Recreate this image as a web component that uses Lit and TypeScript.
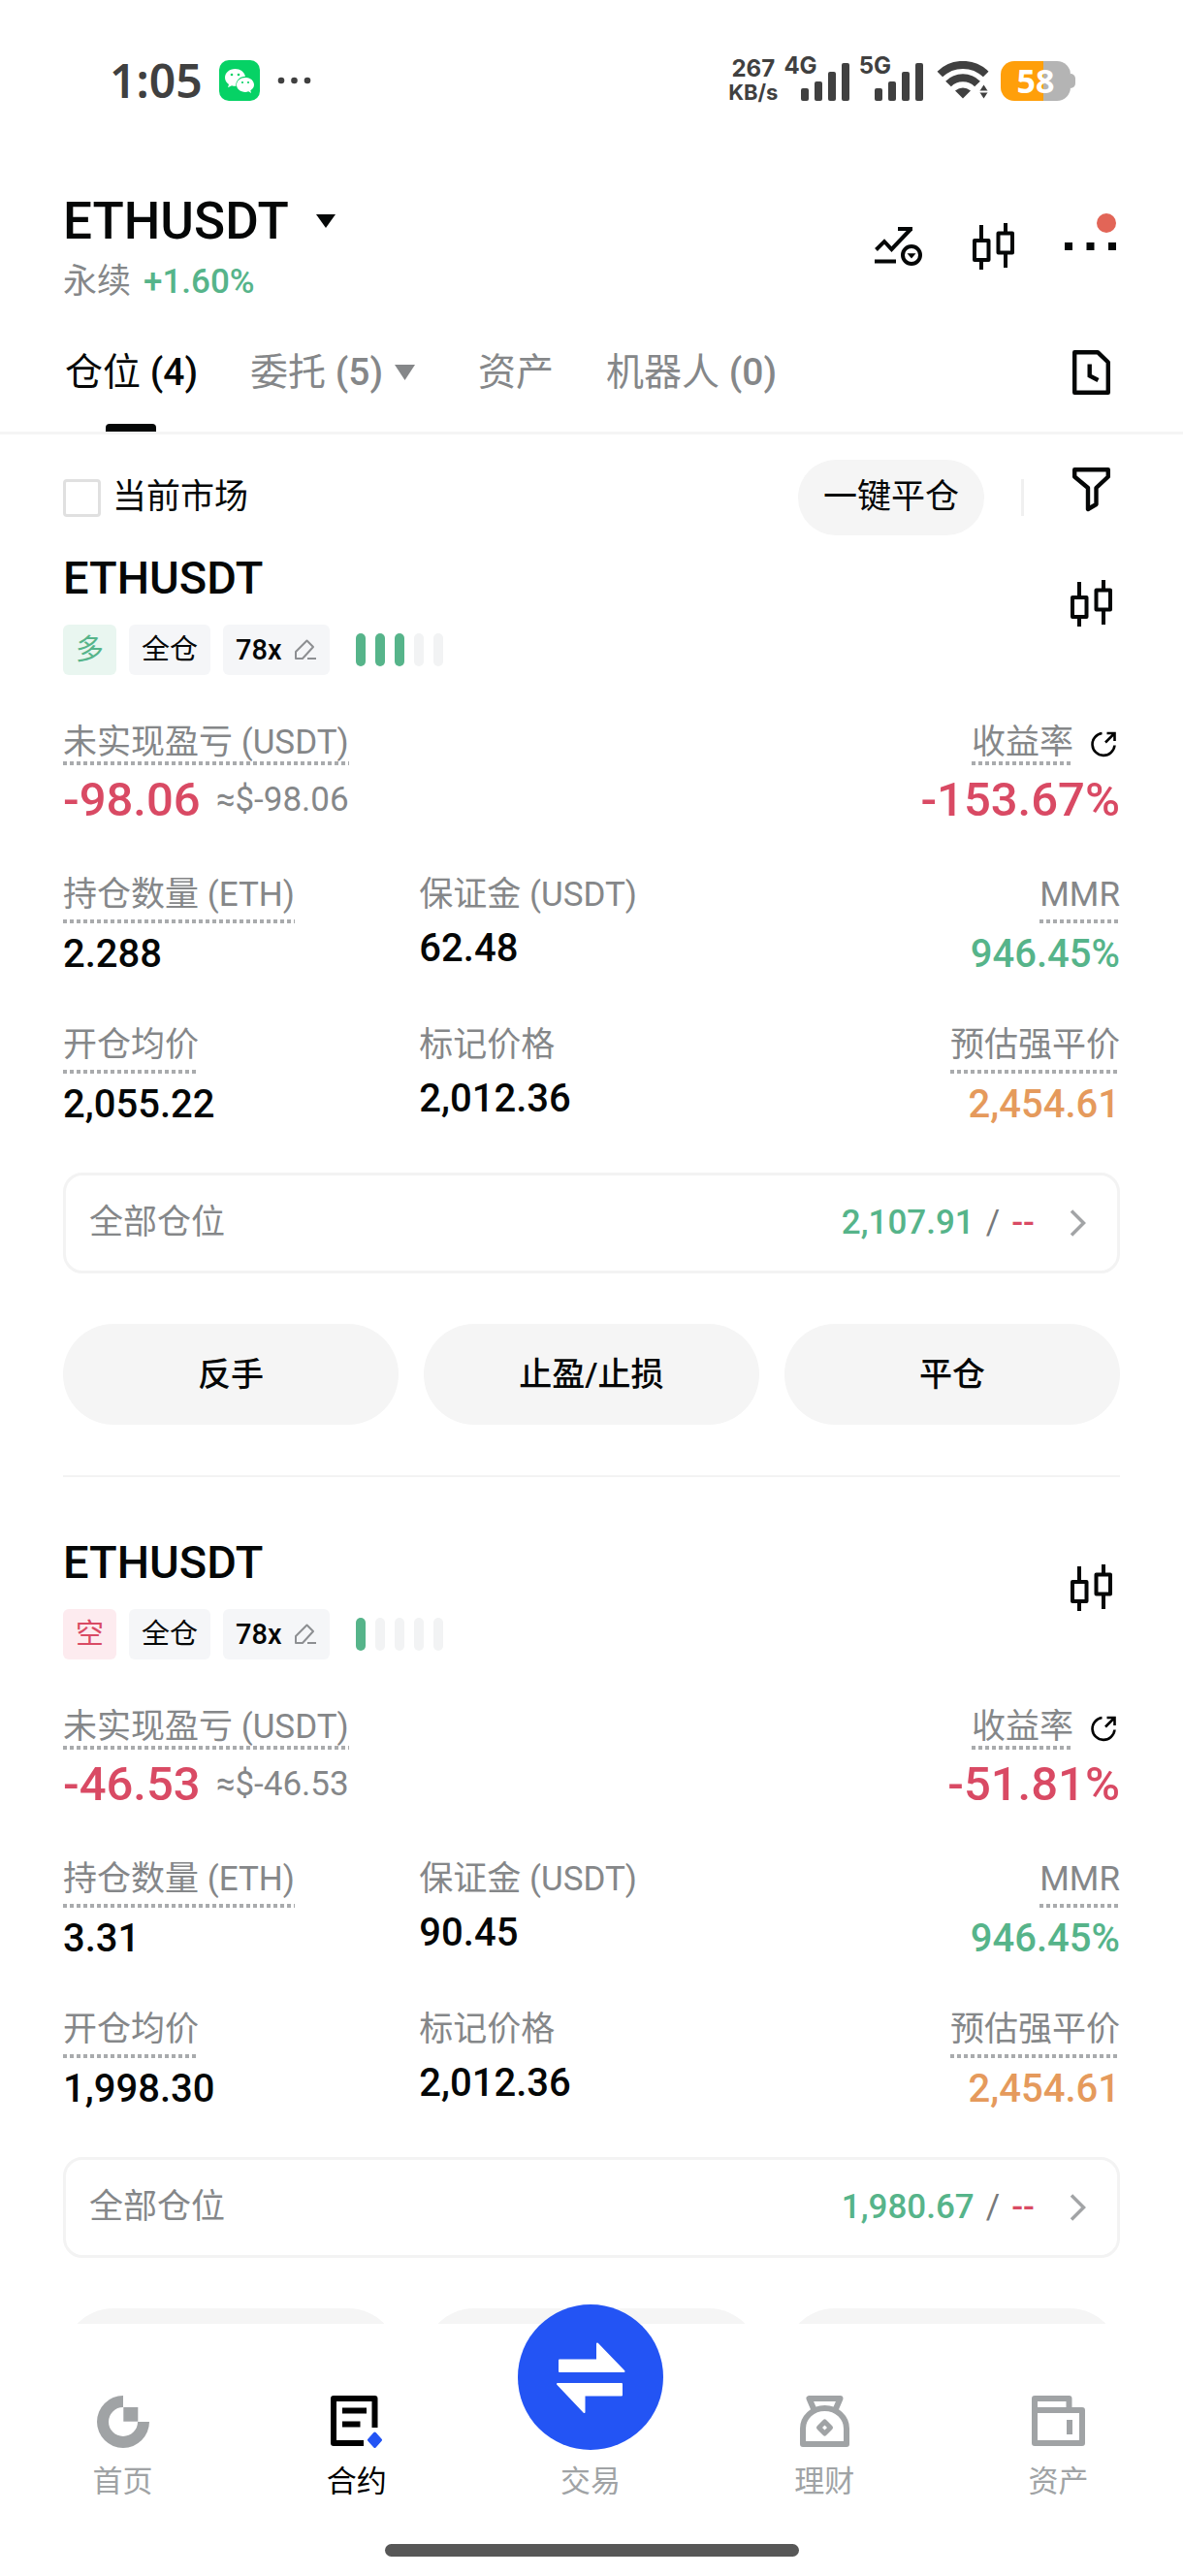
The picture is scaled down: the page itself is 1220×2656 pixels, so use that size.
import { LitElement, html, svg, css, nothing } from "lit";
import { customElement, property, state } from "lit/decorators.js";
import { classMap } from "lit/directives/class-map.js";

interface Position {
  symbol: string;
  side: "long" | "short";
  leverage: string;
  risk: number;
  pnl: string;
  roi: string;
  size: string;
  margin: string;
  mmr: string;
  entry: string;
  mark: string;
  liquidation: string;
  takeProfit: string;
}

const POSITIONS: Position[] = [
  {
    symbol: "ETHUSDT", side: "long", leverage: "78x", risk: 3,
    pnl: "-98.06", roi: "-153.67%", size: "2.288", margin: "62.48", mmr: "946.45%",
    entry: "2,055.22", mark: "2,012.36", liquidation: "2,454.61", takeProfit: "2,107.91",
  },
  {
    symbol: "ETHUSDT", side: "short", leverage: "78x", risk: 1,
    pnl: "-46.53", roi: "-51.81%", size: "3.31", margin: "90.45", mmr: "946.45%",
    entry: "1,998.30", mark: "2,012.36", liquidation: "2,454.61", takeProfit: "1,980.67",
  },
];

// Margins and paddings are reset per tag: a universal reset in a parent's
// scope would override the :host rules of its child components.
const base = css`
  * {
    box-sizing: border-box;
  }
  h2, dl, dt, dd, input {
    margin: 0;
    padding: 0;
  }
  button {
    margin: 0;
    padding: 0;
    font: inherit;
    color: inherit;
    background: none;
    border: 0;
    cursor: pointer;
  }
  a {
    color: inherit;
    text-decoration: none;
  }
  svg {
    display: block;
    flex: none;
  }
`;

const candles = html`<svg width="43" height="48" viewBox="0 0 43 48" fill="none" stroke="currentColor" stroke-width="4" stroke-linejoin="round">
  <path d="M9 2V17M9 39V48M34 0V9M34 32V46" />
  <rect x="2" y="18" width="14.5" height="20" />
  <rect x="26.5" y="10.5" width="14.5" height="20" />
</svg>`;

@customElement("status-bar")
export class StatusBar extends LitElement {
  static styles = [base, css`
    :host {
      display: flex;
      align-items: center;
      justify-content: space-between;
      padding: 58px 111px 0 113px;
      height: 108px;
      color: #404040;
    }
    .left, .right {
      display: flex;
      align-items: center;
    }
    .left { gap: 17px; }
    .time {
      font: 600 48px/50px "Noto Sans", sans-serif;
    }
    .rate {
      display: flex;
      flex-direction: column;
      align-items: center;
      font: 700 24px/24px Inter, sans-serif;
      margin-right: 6px;
    }
    .unit { font-size: 22px; }
    .net {
      display: flex;
      align-items: flex-end;
      height: 42px;
      margin-right: 10px;
    }
    .gen {
      align-self: flex-start;
      font: 700 24px/24px Inter, sans-serif;
      margin: -6px -17px 0 0;
    }
    .wifi { margin: 0 12px 0 4px; }
    .battery {
      display: flex;
      align-items: center;
      justify-content: center;
      width: 72px;
      height: 41px;
      border-radius: 14px;
      background: linear-gradient(90deg, #ff9f0a 61%, #b4b4b4 61%);
      color: #fff;
      font: 700 34px/41px "Noto Sans", sans-serif;
    }
    .nub {
      width: 5px;
      height: 15px;
      border-radius: 0 5px 5px 0;
      background: #b4b4b4;
    }
  `];

  private bars() {
    return html`<svg width="50" height="40" viewBox="0 0 50 40" fill="currentColor">
      <rect x="0" y="27" width="8" height="13" rx="2" />
      <rect x="14" y="20" width="8" height="20" rx="2" />
      <rect x="28" y="10" width="8" height="30" rx="2" />
      <rect x="42" y="1" width="8" height="39" rx="2" />
    </svg>`;
  }

  render() {
    return html`
      <span class="left">
        <span class="time">1:05</span>
        <svg width="42" height="42" viewBox="0 0 42 42">
          <rect width="42" height="42" rx="10" fill="#06d265" />
          <path fill="#fff" d="M16.500 9C10.500 9 6 13 6 18c0 3 1.500 5.300 4 7l-1 3.200 4-2c1.500.5 3 .6 4.500.5-.9-5 3.500-10 9.500-10C25.800 12 21.700 9 16.500 9z" />
          <path fill="#fff" d="M27 18c-5 0-9 3.200-9 7.500s4 7.400 9 7.400c1.200 0 2.300-.2 3.300-.6l2.800 1.600-.8-2.700c2.300-1.400 3.700-3.400 3.700-5.700C36 21.200 32 18 27 18z" />
          <g fill="#06d265">
            <circle cx="13" cy="15" r="1.300" /><circle cx="20" cy="15" r="1.300" />
            <circle cx="24" cy="23" r="1.100" /><circle cx="30" cy="23" r="1.100" />
          </g>
        </svg>
        <svg width="36" height="8" viewBox="0 0 36 8" fill="currentColor">
          <circle cx="5" cy="4" r="3.300" /><circle cx="18.500" cy="4" r="3.300" /><circle cx="32" cy="4" r="3.300" />
        </svg>
      </span>
      <span class="right">
        <span class="rate"><span>267</span><span class="unit">KB/s</span></span>
        <span class="net"><span class="gen">4G</span>${this.bars()}</span>
        <span class="net"><span class="gen">5G</span>${this.bars()}</span>
        <svg class="wifi" width="54" height="40" viewBox="0 0 54 40" fill="none" stroke="currentColor" stroke-width="8">
          <path d="M3.300 13.500A34 34 0 0 1 50.700 13.500" />
          <path d="M12 23.500A21 21 0 0 1 42 23.500" />
          <path d="M27 38.500L19 30.500Q27 24.500 35 30.500Z" fill="currentColor" stroke="none" />
          <path d="M43 31.500L48.500 23L54 31.500L48.500 40Z" fill="currentColor" stroke="#fff" stroke-width="1.500" />
          <path d="M43 31.500H54" stroke="#fff" stroke-width="2" />
        </svg>
        <span class="battery">58</span><span class="nub"></span>
      </span>
    `;
  }
}

@customElement("position-card")
export class PositionCard extends LitElement {
  @property({ attribute: false }) position!: Position;

  static styles = [base, css`
    :host {
      display: block;
      padding-bottom: 52px;
      border-bottom: 2px solid #f3f3f3;
    }
    .head {
      display: flex;
      justify-content: space-between;
      align-items: flex-start;
    }
    .symbol {
      font-size: 47px;
      line-height: 56px;
      font-weight: 500;
    }
    .chart { padding: 30px 8px 0; }
    .tags {
      display: flex;
      align-items: center;
      gap: 13px;
      margin-top: 20px;
    }
    .tag {
      display: flex;
      align-items: center;
      gap: 12px;
      height: 52px;
      padding: 0 13px;
      border-radius: 6px;
      background: #f5f6f8;
      font-size: 29px;
      line-height: 52px;
    }
    .lever { font-weight: 500; }
    .lever svg { color: #8d8f92; }
    .long { background: #e9f6f0; color: #56b48a; }
    .short { background: #fdebef; color: #d94a64; }
    .risk {
      display: flex;
      gap: 10px;
      margin-left: 14px;
    }
    .bar {
      width: 10px;
      height: 34px;
      border-radius: 5px;
      background: #f2f3f4;
    }
    .on { background: #56b48a; }
    .row {
      display: grid;
      grid-template-columns: repeat(3, 1fr);
      column-gap: 12px;
      margin-top: 49px;
    }
    .summary { grid-template-columns: repeat(2, 1fr); }
    .cell {
      display: flex;
      flex-direction: column;
      align-items: flex-start;
      gap: 8px;
    }
    .end { align-items: flex-end; }
    .label {
      display: flex;
      gap: 18px;
      font-size: 35px;
      line-height: 42px;
      color: #858789;
      padding-bottom: 2px;
    }
    .hint {
      padding-bottom: 8px;
      background: repeating-linear-gradient(90deg, #a9abad 0 4px, transparent 4px 7px) left bottom / 100% 4px no-repeat;
    }
    .tight { padding-bottom: 2px; }
    .share {
      display: flex;
      align-items: center;
      color: #000;
      padding-right: 4px;
    }
    .bare { padding: 0; }
    .value {
      font-size: 40px;
      line-height: 48px;
      font-weight: 500;
    }
    .big {
      display: flex;
      align-items: center;
      gap: 16px;
      font-size: 49px;
      line-height: 56px;
    }
    .approx {
      font-size: 35px;
      font-weight: 400;
      color: #858789;
    }
    .red { color: #d94a64; }
    .green { color: #56b48a; }
    .orange { color: #e59a5c; }
    .all {
      display: flex;
      align-items: center;
      width: 100%;
      height: 104px;
      margin-top: 46px;
      padding: 0 32px 0 24px;
      border: 3px solid #f3f3f3;
      border-radius: 20px;
      font-size: 35px;
      line-height: 42px;
      color: #858789;
    }
    .targets {
      display: flex;
      gap: 12px;
      margin-left: auto;
      margin-right: 36px;
      font-weight: 500;
    }
    .slash { font-weight: 400; color: #77797b; }
    .actions {
      display: grid;
      grid-template-columns: repeat(3, 1fr);
      gap: 26px;
      margin-top: 52px;
    }
    .action {
      height: 104px;
      border-radius: 52px;
      background: #f5f5f5;
      font-size: 34px;
      line-height: 40px;
      font-weight: 500;
    }
  `];

  private cell(label: string, value: string, opts: { hint?: boolean; end?: boolean; tone?: string } = {}) {
    return html`<div class=${classMap({ cell: true, end: !!opts.end })}>
      <dt class=${classMap({ label: true, hint: !!opts.hint })}>${label}</dt>
      <dd class="value ${opts.tone ?? ""}">${value}</dd>
    </div>`;
  }

  render() {
    const p = this.position;
    return html`
      <div class="head">
        <div>
          <h2 class="symbol">${p.symbol}</h2>
          <div class="tags">
            <span class="tag ${p.side}">${p.side === "long" ? "多" : "空"}</span>
            <span class="tag">全仓</span>
            <button class="tag lever">${p.leverage}
              <svg width="24" height="22" viewBox="0 0 24 22" fill="none" stroke="currentColor" stroke-width="2" stroke-linejoin="round">
                <path d="M2 20V13L13.500 1.500L20 8L9 20ZM14 20H23" />
              </svg>
            </button>
            <div class="risk" role="meter" aria-label="风险" aria-valuemin="0" aria-valuemax="5" aria-valuenow=${p.risk}>
              ${[0, 1, 2, 3, 4].map((i) => html`<span class=${classMap({ bar: true, on: i < p.risk })}></span>`)}
            </div>
          </div>
        </div>
        <button class="chart" aria-label="图表">${candles}</button>
      </div>
      <dl class="row summary">
        <div class="cell">
          <dt class="label hint tight">未实现盈亏 (USDT)</dt>
          <dd class="value big red">${p.pnl}<span class="approx">≈$${p.pnl}</span></dd>
        </div>
        <div class="cell end">
          <dt class="label bare">
            <span class="hint tight">收益率</span>
            <button class="share" aria-label="分享">
              <svg width="26" height="27" viewBox="0 0 26 27" fill="none" stroke="currentColor" stroke-width="2.600">
                <path d="M11.500 2A11.500 11.500 0 1 0 24.500 14.500M15 11.500L24 2.500M16.500 2H24.500V10" />
              </svg>
            </button>
          </dt>
          <dd class="value big red">${p.roi}</dd>
        </div>
      </dl>
      <dl class="row">
        ${this.cell("持仓数量 (ETH)", p.size, { hint: true })}
        ${this.cell("保证金 (USDT)", p.margin)}
        ${this.cell("MMR", p.mmr, { hint: true, end: true, tone: "green" })}
      </dl>
      <dl class="row">
        ${this.cell("开仓均价", p.entry, { hint: true })}
        ${this.cell("标记价格", p.mark)}
        ${this.cell("预估强平价", p.liquidation, { hint: true, end: true, tone: "orange" })}
      </dl>
      <button class="all">
        <span>全部仓位</span>
        <span class="targets">
          <span class="green">${p.takeProfit}</span><span class="slash">/</span><span class="red">--</span>
        </span>
        <svg width="17" height="28" viewBox="0 0 17 28" fill="none" stroke="#a2a4a6" stroke-width="3.500">
          <path d="M2 1.500L14.500 14L2 26.500" />
        </svg>
      </button>
      <div class="actions">
        <button class="action">反手</button>
        <button class="action">止盈/止损</button>
        <button class="action">平仓</button>
      </div>
    `;
  }
}

@customElement("bottom-nav")
export class BottomNav extends LitElement {
  static styles = [base, css`
    :host {
      display: flex;
      flex-direction: column;
      align-items: center;
      justify-content: space-between;
      position: relative;
      z-index: 1;
      flex: none;
      height: 260px;
      padding-bottom: 20px;
      background: #fff;
    }
    .items {
      display: grid;
      grid-template-columns: repeat(5, 1fr);
      width: 100%;
      padding: 74px 8px 0 6px;
    }
    .item {
      display: flex;
      flex-direction: column;
      align-items: center;
      gap: 15px;
      font-size: 31px;
      line-height: 40px;
      color: #a0a3a5;
    }
    .icon {
      display: flex;
      align-items: center;
      justify-content: center;
      height: 54px;
    }
    .active { color: #000; }
    .trade {
      width: 150px;
      height: 150px;
      margin: -94px 0 -2px;
      border-radius: 50%;
      background: #2354f4;
    }
    .home {
      width: 35%;
      height: 13px;
      border-radius: 7px;
      background: #575757;
    }
  `];

  private items = [
    { label: "首页", href: "#home", icon: svg`<svg width="54" height="54" viewBox="0 0 54 54" fill="currentColor">
        <path d="M27 0A27 27 0 1 0 54 27H42A15 15 0 1 1 27 12Z" /><rect x="27.300" y="12" width="15" height="14.700" /></svg>` },
    { label: "合约", href: "#futures", icon: svg`<svg width="54" height="54" viewBox="0 0 54 54" fill="none" stroke="currentColor" stroke-width="6">
        <path d="M34 49H3V3H45.500V33" stroke-linejoin="round" /><path d="M12 15.500H37M12 29.500H30.500" />
        <path d="M45.500 39L51.500 45.700L45.500 52.500L39.500 45.700Z" fill="#2354f4" stroke="#2354f4" stroke-width="3" stroke-linejoin="round" /></svg>` },
    { label: "交易", href: "#trade", icon: svg`<svg width="150" height="150" viewBox="0 0 150 150" fill="#fff" stroke="#fff" stroke-width="2" stroke-linejoin="round">
        <path d="M43 57.500H82V40.500L109.500 69H43Z" /><path d="M107 82H41L68.500 111V93.500H107Z" /></svg>` },
    { label: "理财", href: "#earn", icon: svg`<svg width="51" height="54" viewBox="0 0 51 54" fill="none" stroke="currentColor" stroke-width="6" stroke-linejoin="round">
        <path d="M15.500 17L9.500 3H41.500L35.500 17" /><path d="M3 50V34A22.500 21 0 0 1 48 34V50Z" />
        <path d="M25.500 27L31.500 33L25.500 39L19.500 33Z" stroke-width="5" /></svg>` },
    { label: "资产", href: "#assets", icon: svg`<svg width="55" height="54" viewBox="0 0 55 54" fill="none" stroke="currentColor" stroke-width="6" stroke-linejoin="round">
        <path d="M3 15H52V49H3ZM3 15V3H38.500V15" /><path d="M39 25V40" /></svg>` },
  ];

  render() {
    return html`
      <nav class="items">
        ${this.items.map((it) => html`
          <a class=${classMap({ item: true, active: it.href === "#futures" })} href=${it.href}>
            <span class=${classMap({ icon: true, trade: it.href === "#trade" })}>${it.icon}</span>
            <span>${it.label}</span>
          </a>`)}
      </nav>
      <div class="home"></div>
    `;
  }
}

@customElement("app-root")
export class AppRoot extends LitElement {
  @state() private tab = 0;

  static styles = [base, css`
    :host {
      display: flex;
      flex-direction: column;
      height: 100vh;
      background: #fff;
      color: #050707;
      font-family: Roboto, "Noto Sans CJK SC", sans-serif;
    }
    .header {
      display: flex;
      align-items: center;
      justify-content: space-between;
      padding: 88px 65px 10px;
    }
    .pair {
      display: flex;
      align-items: center;
      gap: 28px;
      font-size: 53px;
      line-height: 64px;
      font-weight: 500;
    }
    .sub {
      display: flex;
      gap: 13px;
      margin-top: 10px;
      font-size: 35px;
      line-height: 42px;
      color: #858789;
    }
    .change { color: #56b48a; font-weight: 500; }
    .tools {
      display: flex;
      align-items: center;
      gap: 52px;
    }
    .more { position: relative; padding-right: 4px; }
    .badge {
      position: absolute;
      top: -30px;
      right: 4px;
      width: 20px;
      height: 20px;
      border-radius: 50%;
      background: #e26557;
    }
    .tabs {
      display: flex;
      justify-content: space-between;
      height: 126px;
      padding: 0 75px 0 67px;
      border-bottom: 3px solid #f5f5f5;
    }
    .list { display: flex; gap: 54px; }
    .tab {
      display: flex;
      align-items: center;
      gap: 12px;
      position: relative;
      font-size: 39px;
      line-height: 46px;
      color: #858789;
    }
    .menu { padding-right: 11px; }
    .count { font-weight: 500; }
    .current { color: #050707; }
    .current::after {
      content: "";
      position: absolute;
      left: 50%;
      bottom: 0;
      width: 52px;
      height: 8px;
      margin-left: -27px;
      border-radius: 4px 4px 0 0;
      background: #050707;
    }
    .content {
      flex: 1;
      min-height: 0;
      overflow-y: auto;
      scrollbar-width: none;
      padding: 26px 65px 0;
    }
    .filter {
      display: flex;
      align-items: center;
      margin-bottom: 16px;
    }
    .market {
      display: flex;
      align-items: center;
      gap: 12px;
      margin-right: auto;
      font-size: 35px;
      line-height: 42px;
    }
    .check {
      appearance: none;
      width: 39px;
      height: 39px;
      border: 3px solid #e0e0e0;
      border-radius: 4px;
    }
    .check:checked { background: #050707; }
    .close-all {
      height: 78px;
      padding: 0 26px;
      border-radius: 39px;
      background: #f5f5f5;
      font-size: 35px;
      line-height: 42px;
    }
    .rule {
      width: 3px;
      height: 38px;
      margin: 0 50px 0 38px;
      background: #f0f0f0;
    }
    .funnel { padding: 0 10px 16px 0; }
    .card + .card { margin-top: 60px; }
  `];

  private tabs = [
    { label: "仓位", count: 4 },
    { label: "委托", count: 5, menu: true },
    { label: "资产" },
    { label: "机器人", count: 0 },
  ];

  render() {
    return html`
      <status-bar></status-bar>
      <header class="header">
        <div>
          <button class="pair">ETHUSDT
            <svg width="20" height="14" viewBox="0 0 20 14" fill="currentColor"><path d="M0 0H20L10 14Z" /></svg>
          </button>
          <div class="sub"><span>永续</span><span class="change">+1.60%</span></div>
        </div>
        <div class="tools">
          <button aria-label="指标">
            <svg width="49" height="41" viewBox="0 0 49 41" fill="none" stroke="currentColor" stroke-width="4">
              <path d="M1.500 23.500L10 15L17.500 23L37 2.500M24 2H39M0 35.500H22" />
              <circle cx="38" cy="29" r="9" />
              <path d="M33.500 27.200H42.500L38 32.500Z" fill="currentColor" stroke="none" />
            </svg>
          </button>
          <button aria-label="图表">${candles}</button>
          <button class="more" aria-label="更多">
            <svg width="53" height="8" viewBox="0 0 53 8" fill="currentColor">
              <rect x="0" width="8" height="8" /><rect x="22.500" width="8" height="8" /><rect x="45" width="8" height="8" />
            </svg>
            <span class="badge"></span>
          </button>
        </div>
      </header>
      <div class="tabs">
        <div class="list" role="tablist">
          ${this.tabs.map((t, i) => html`
            <button role="tab" aria-selected=${i === this.tab} @click=${() => (this.tab = i)}
              class=${classMap({ tab: true, current: i === this.tab, menu: !!t.menu })}>
              <span>${t.label}${t.count === undefined ? nothing : html` <span class="count">(${t.count})</span>`}</span>
              ${t.menu ? html`<svg width="21" height="16" viewBox="0 0 21 16" fill="currentColor"><path d="M0 0H21L10.500 16Z" /></svg>` : nothing}
            </button>`)}
        </div>
        <button aria-label="历史记录">
          <svg width="39" height="46" viewBox="0 0 39 46" fill="none" stroke="currentColor" stroke-width="4.400" stroke-linejoin="round">
            <path d="M2.200 2.200H26L36.800 12.500V43.800H2.200Z" />
            <path d="M17.700 14.500V26.500L26.500 31" stroke-linejoin="miter" />
          </svg>
        </button>
      </div>
      <main class="content">
        <div class="filter">
          <label class="market"><input class="check" type="checkbox" />当前市场</label>
          <button class="close-all">一键平仓</button>
          <span class="rule"></span>
          <button class="funnel" aria-label="筛选">
            <svg width="39" height="46" viewBox="0 0 39 46" fill="none" stroke="currentColor" stroke-width="4.400" stroke-linejoin="round">
              <path d="M2.200 2.200H36.800V9.500L24.500 21V38L16 43V21L2.200 9.500Z" />
            </svg>
          </button>
        </div>
        ${POSITIONS.map((p) => html`<position-card class="card" .position=${p}></position-card>`)}
      </main>
      <bottom-nav></bottom-nav>
    `;
  }
}
